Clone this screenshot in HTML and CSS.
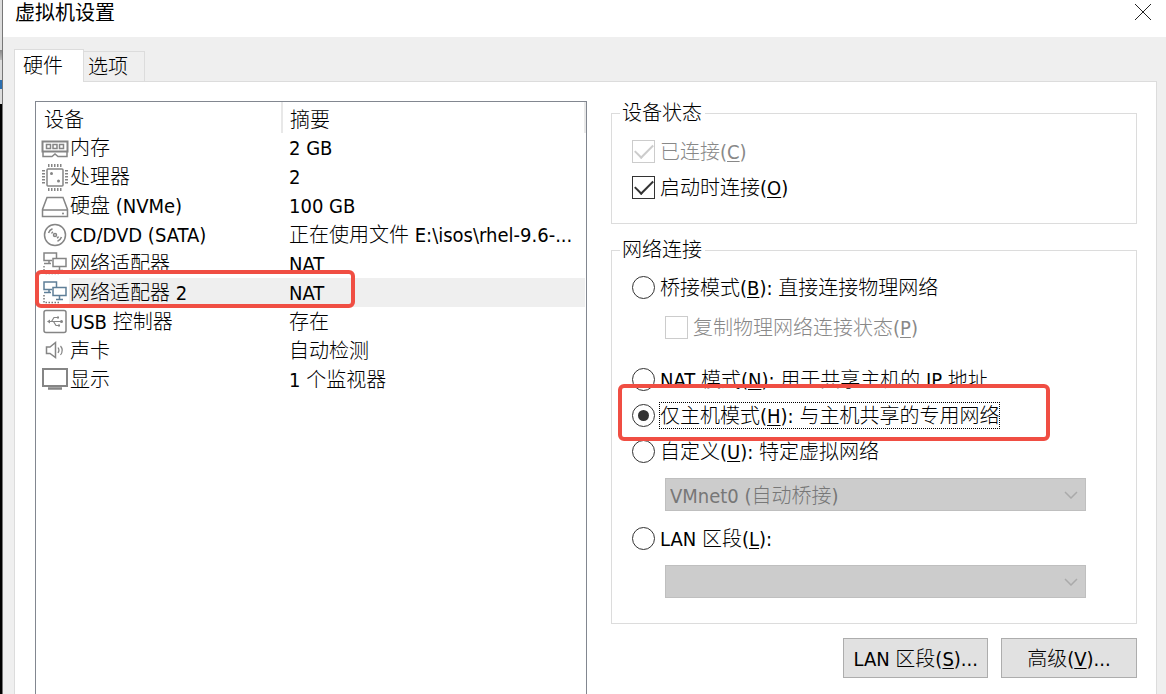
FILE: index.html
```html
<!DOCTYPE html>
<html lang="zh-CN">
<head>
    <meta charset="UTF-8">
    <meta name="viewport" content="width=device-width, initial-scale=1.0">
    <title>虚拟机设置</title>
    <link rel="stylesheet" href="styles.css">
</head>
<body>

    <!-- Edge of the window behind the dialog -->
    <div class="backdrop"></div>

    <div class="dialog">
        <header class="titlebar">
            <h1>虚拟机设置</h1>
            <button class="close-btn" aria-label="关闭">
                <svg width="18" height="18" viewBox="0 0 18 18"><path d="M1 1L17 17M17 1L1 17"/></svg>
            </button>
        </header>

        <div class="tabs">
            <button class="tab active">硬件</button>
            <button class="tab">选项</button>
        </div>

        <main class="panel">
            <!-- Device list -->
            <div class="device-list">
                <table>
                    <thead>
                        <tr><th class="col-device">设备</th><th>摘要</th></tr>
                    </thead>
                    <tbody>
                        <tr>
                            <td><div class="device">
                                <svg class="icon" viewBox="0 0 28 28"><path d="M1.500 7.500H26.500V17.500H1.500Z" stroke-width="2"/><path stroke-width="1.500" d="M5.500 10.500H9.500V14.500H5.500ZM12 10.500H16V14.500H12ZM18.500 10.500H22.500V14.500H18.500Z"/><path d="M2 18V22.500H11L14 20L17 22.500H26V18"/></svg>
                                <span>内存</span>
                            </div></td>
                            <td>2 GB</td>
                        </tr>
                        <tr>
                            <td><div class="device">
                                <svg class="icon" viewBox="0 0 28 28"><rect x="6" y="6" width="16" height="17" rx="1"/><path stroke-dasharray="1.500 1.500" stroke-width="3" d="M7 2.500H22M7 26.500H22M2.500 7V22M25.500 7V22"/><circle class="fill" cx="10.500" cy="10.500" r="1.500"/><circle class="fill" cx="17.500" cy="18" r="1.500"/></svg>
                                <span>处理器</span>
                            </div></td>
                            <td>2</td>
                        </tr>
                        <tr>
                            <td><div class="device">
                                <svg class="icon" viewBox="0 0 28 28"><path d="M6 5.500H22L26.500 17.500V24.500H1.500V17.500ZM1.500 18H26.500"/><circle class="fill" cx="22" cy="21.500" r="1"/></svg>
                                <span>硬盘 (NVMe)</span>
                            </div></td>
                            <td>100 GB</td>
                        </tr>
                        <tr>
                            <td><div class="device">
                                <svg class="icon" viewBox="0 0 28 28"><circle cx="14" cy="14" r="10.500"/><circle cx="14" cy="14" r="1.500"/><path d="M7.500 12A7 7 0 0 1 11.500 7.800M10.500 12.500A4 4 0 0 1 12 10.800M20.500 16A7 7 0 0 1 16.500 20.200M17.500 15.500A4 4 0 0 1 16 17.200"/></svg>
                                <span>CD/DVD (SATA)</span>
                            </div></td>
                            <td>正在使用文件 E:\isos\rhel-9.6-...</td>
                        </tr>
                        <tr>
                            <td><div class="device">
                                <svg class="icon" viewBox="0 0 28 28"><path d="M11 10.500H3V3H15.500V8M8 10.500V13M3 13.500H10M12 8.500H25V16.500H12ZM18.500 16.500V20M15 20.500H22"/><path stroke-dasharray="1.500 1.500" d="M3 16V23.500H19"/></svg>
                                <span>网络适配器</span>
                            </div></td>
                            <td>NAT</td>
                        </tr>
                        <tr class="selected">
                            <td><div class="device">
                                <svg class="icon" viewBox="0 0 28 28"><path d="M11 10.500H3V3H15.500V8M8 10.500V13M3 13.500H10M12 8.500H25V16.500H12ZM18.500 16.500V20M15 20.500H22"/><path class="wire" stroke-dasharray="1.500 1.500" d="M3 16V23.500H19"/></svg>
                                <span>网络适配器 2</span>
                                <i class="highlight highlight-device"></i>
                            </div></td>
                            <td>NAT</td>
                        </tr>
                        <tr>
                            <td><div class="device">
                                <svg class="icon" viewBox="0 0 28 28"><rect x="3" y="2.500" width="22" height="22" rx="2"/><path stroke-width="1.200" d="M8 13.500H20M10.500 13.500L13 9.500H16M12.500 13.500L15 17.500H17"/><path class="fill" d="M6 13.500L9 11.500V15.500ZM16 8.500H18V10.500H16ZM17 16.500H19V18.500H17Z"/><circle class="fill" cx="20.500" cy="13.500" r="1.500"/></svg>
                                <span>USB 控制器</span>
                            </div></td>
                            <td>存在</td>
                        </tr>
                        <tr>
                            <td><div class="device">
                                <svg class="icon" viewBox="0 0 28 28"><path d="M5.500 10H9L14.500 5.500V20.500L9 16.500H5.500Z"/><path stroke-width="1.200" d="M17 10.500Q19 13 17 16M19.500 9Q23 13 19.500 18"/></svg>
                                <span>声卡</span>
                            </div></td>
                            <td>自动检测</td>
                        </tr>
                        <tr>
                            <td><div class="device">
                                <svg class="icon" viewBox="0 0 28 28"><rect x="2" y="3" width="24" height="17" stroke-width="2"/><path stroke-width="2.500" d="M7 22.500H21"/></svg>
                                <span>显示</span>
                            </div></td>
                            <td>1 个监视器</td>
                        </tr>
                    </tbody>
                </table>
            </div>

            <!-- Settings of the selected device -->
            <div class="settings">
                <fieldset class="status">
                    <legend>设备状态</legend>
                    <label class="option disabled"><input type="checkbox" checked disabled><span>已连接(<u>C</u>)</span></label>
                    <label class="option"><input type="checkbox" checked><span>启动时连接(<u>O</u>)</span></label>
                </fieldset>

                <fieldset class="network">
                    <legend>网络连接</legend>
                    <label class="option"><input type="radio" name="net"><span>桥接模式(<u>B</u>): 直接连接物理网络</span></label>
                    <label class="option sub disabled"><input type="checkbox" disabled><span>复制物理网络连接状态(<u>P</u>)</span></label>
                    <label class="option"><input type="radio" name="net"><span>NAT 模式(<u>N</u>): 用于共享主机的 IP 地址</span></label>
                    <label class="option focused"><input type="radio" name="net" checked><span>仅主机模式(<u>H</u>): 与主机共享的专用网络</span><i class="highlight highlight-mode"></i></label>
                    <label class="option"><input type="radio" name="net"><span>自定义(<u>U</u>): 特定虚拟网络</span></label>
                    <div class="select-box">
                        <select disabled aria-label="特定虚拟网络"><option>VMnet0 (自动桥接)</option></select>
                        <svg width="14" height="8" viewBox="0 0 14 8"><path d="M1 1L7 7L13 1"/></svg>
                    </div>
                    <label class="option"><input type="radio" name="net"><span>LAN 区段(<u>L</u>):</span></label>
                    <div class="select-box">
                        <select disabled aria-label="LAN 区段"><option></option></select>
                        <svg width="14" height="8" viewBox="0 0 14 8"><path d="M1 1L7 7L13 1"/></svg>
                    </div>
                </fieldset>

                <div class="buttons">
                    <button class="btn">LAN 区段(<u>S</u>)...</button>
                    <button class="btn">高级(<u>V</u>)...</button>
                </div>
            </div>
        </main>
    </div>

</body>
</html>
```
FILE: styles.css
```css
* {
    box-sizing: border-box;
}

body {
    margin: 0;
    display: flex;
    height: 100vh;
    overflow: hidden;
    font-family: "DejaVu Sans Condensed", "Noto Sans CJK SC", sans-serif;
    font-size: 20px;
    font-weight: 300;
    line-height: 24px;
    color: #000;
    background-color: #efefef;
}

button, select, input {
    font: inherit;
    color: inherit;
    margin: 0;
}

.backdrop {
    width: 3px;
    border-right: 1px solid #777;
    background: linear-gradient(#ddd 50px, #888 50px, #bbb 60px, #ddd 60px, #ddd 80px, #2c6fb0 80px, #2c6fb0 89px, #ddd 89px, #ddd 104px, #000 104px);
}

.dialog {
    flex: 1;
    min-width: 0;
    display: flex;
    flex-direction: column;
}

/* Title bar */
.titlebar {
    display: flex;
    justify-content: space-between;
    align-items: flex-start;
    height: 37px;
    padding: 0 14px 0 12px;
    background-color: #fff;
}

.titlebar h1 {
    margin: 0;
    font-size: 20px;
    font-weight: 400;
    line-height: 26px;
}

.close-btn {
    display: flex;
    padding: 3px 0;
    border: none;
    background: none;
}

.close-btn svg {
    fill: none;
    stroke: #222;
}

/* Tabs */
.tabs {
    display: flex;
    align-items: flex-end;
    padding: 12px 11px 0;
}

.tab {
    height: 30px;
    padding: 0 16px 0 4px;
    border: 1px solid #dcdcdc;
    border-width: 1px 1px 0 0;
    background-color: #efefef;
}

.tab.active {
    height: 33px;
    margin-bottom: -1px;
    padding: 0 20px 0 8px;
    border-width: 1px 1px 0 1px;
    background-color: #fff;
    position: relative;
}

.panel {
    flex: 1;
    display: grid;
    grid-template-columns: 552fr 526fr;
    gap: 24px;
    margin: 0 9px 0 11px;
    padding: 19px 19px 0 20px;
    border: 1px solid #dcdcdc;
    border-bottom: none;
    background-color: #fff;
}

/* Device list */
.device-list {
    border: 1px solid #828790;
    border-bottom: none;
}

table {
    width: 100%;
    table-layout: fixed;
    border-collapse: collapse;
}

th {
    height: 31px;
    padding: 4px 8px 0;
    border-right: 2px solid #e8e8e8;
    font-weight: 300;
    text-align: left;
}

th + th {
    padding-left: 7px;
}

.col-device {
    width: 246px;
}

td {
    height: 29px;
    padding: 0 0 0 7px;
    white-space: nowrap;
}

td:first-child {
    padding: 0 0 0 5px;
}

.device {
    display: flex;
    align-items: center;
    position: relative;
}

.device span {
    flex: 1;
    height: 29px;
    padding-left: 1px;
    line-height: 31px;
}

.icon {
    width: 28px;
    height: 28px;
    fill: none;
    stroke: #858585;
    stroke-width: 1.5;
}

.icon .fill {
    fill: #858585;
    stroke: none;
}

.selected td:last-child, .selected span {
    background-color: #efefef;
}

.selected .icon {
    stroke: #5f7f98;
}

.selected .wire {
    stroke: #777;
}

/* Red frames over the important rows */
.highlight {
    position: absolute;
    border: 4px solid #f04e43;
    border-radius: 6px;
}

.highlight-device {
    top: -8px;
    left: -6px;
    width: 320px;
    height: 38px;
}

.highlight-mode {
    top: -13px;
    left: -14px;
    width: 432px;
    height: 57px;
}

/* Settings */
fieldset {
    min-width: 0;
    margin: 0;
    border: 1px solid #dcdcdc;
}

legend {
    padding: 0 3px 0 2px;
}

.status {
    padding: 8px 20px 18px 8px;
}

.network {
    margin-top: 14px;
    padding: 7px 50px 25px 8px;
}

.option {
    display: flex;
    align-items: center;
    gap: 5px;
    height: 36px;
    margin-left: 12px;
    white-space: nowrap;
}

.option span {
    padding-top: 1px;
}

.option.sub {
    margin: 4px 0 16px 45px;
}

.disabled {
    color: #888;
}

.option input {
    appearance: none;
    flex: none;
    display: grid;
    place-items: center;
    width: 23px;
    height: 23px;
    border: 1px solid #333;
    background-color: #fff;
}

.option input:disabled {
    border-color: #ccc;
}

.option input[type="radio"] {
    border-radius: 50%;
}

.option input[type="radio"]:checked::before {
    content: "";
    width: 11px;
    height: 11px;
    border-radius: 50%;
    background-color: #333;
}

.option input[type="checkbox"]:checked::before {
    content: "";
    width: 16px;
    height: 8px;
    margin-bottom: 5px;
    border: solid #333;
    border-width: 0 0 2px 2px;
    transform: rotate(-45deg);
}

.option input[type="checkbox"]:disabled::before {
    border-color: #ccc;
}

.focused {
    position: relative;
}

.focused span {
    outline: 1px dotted #000;
}

u {
    text-underline-offset: 2px;
    text-decoration-thickness: 1px;
}

.select-box {
    display: grid;
    align-items: center;
    margin: 9px 0 9px 45px;
}

.select-box:last-child {
    margin-bottom: 0;
}

.select-box select, .select-box svg {
    grid-area: 1 / 1;
}

.select-box select {
    appearance: none;
    height: 33px;
    padding: 2px 4px 0;
    border: 1px solid #bfbfbf;
    border-radius: 0;
    color: #777;
    background-color: #ccc;
    opacity: 1;
}

.select-box svg {
    justify-self: end;
    margin-right: 8px;
    fill: none;
    stroke: #aaa;
    stroke-width: 1.5;
}

.buttons {
    display: flex;
    justify-content: flex-end;
    gap: 13px;
    margin-top: 14px;
}

.btn {
    min-width: 136px;
    height: 40px;
    padding: 2px 9px 0;
    border: 1px solid #adadad;
    background-color: #e1e1e1;
}
```
